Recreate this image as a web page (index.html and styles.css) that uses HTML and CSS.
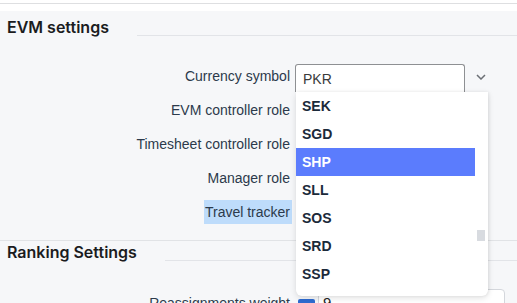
FILE: index.html
```html
<!DOCTYPE html>
<html lang="en">
<head>
    <meta charset="UTF-8">
    <meta name="viewport" content="width=device-width, initial-scale=1.0">
    <title>EVM settings</title>
    <link rel="stylesheet" href="styles.css">
</head>
<body>
    <div class="top-rule"></div>

    <div class="page">
        <section class="section first">
            <div class="section-head">
                <h2>EVM settings</h2>
                <div class="head-rule"></div>
            </div>

            <div class="form">
                <div class="row">
                    <label>Currency symbol</label>
                    <div class="control">
                        <div class="select">
                            <span class="select-value">PKR</span>
                            <div class="dropdown">
                                <ul class="options">
                                    <li>SEK</li>
                                    <li>SGD</li>
                                    <li class="active">SHP</li>
                                    <li>SLL</li>
                                    <li>SOS</li>
                                    <li>SRD</li>
                                    <li>SSP</li>
                                </ul>
                                <div class="scroll-thumb"></div>
                            </div>
                        </div>
                        <svg class="chevron" width="10" height="6" viewBox="0 0 10 6">
                            <polyline points="1,1 5,5 9,1" fill="none" stroke="#6b6f75" stroke-width="1.5"/>
                        </svg>
                    </div>
                </div>
                <div class="row">
                    <label>EVM controller role</label>
                    <div class="control"></div>
                </div>
                <div class="row">
                    <label>Timesheet controller role</label>
                    <div class="control"></div>
                </div>
                <div class="row">
                    <label>Manager role</label>
                    <div class="control"></div>
                </div>
                <div class="row">
                    <label><span class="selected">Travel tracker</span></label>
                    <div class="control"></div>
                </div>
            </div>
        </section>

        <section class="section second">
            <div class="section-head">
                <h2>Ranking Settings</h2>
                <div class="head-rule"></div>
            </div>

            <div class="form">
                <div class="row weight-row">
                    <label>Reassignments weight</label>
                    <div class="control">
                        <span class="checkbox">
                            <svg width="12" height="10" viewBox="0 0 12 10">
                                <polyline points="1.5,5 4.5,8 10.5,1.5" fill="none" stroke="#fff" stroke-width="2"/>
                            </svg>
                        </span>
                        <div class="number-input">9</div>
                    </div>
                </div>
            </div>
        </section>
    </div>
</body>
</html>
```

FILE: styles.css
```css
body {
    margin: 0;
    background-color: #fff;
    font-family: 'Liberation Sans', Arial, sans-serif;
    font-size: 14px;
    color: #2c3a4b;
    height: 303px;
    overflow: hidden;
}

.top-rule {
    height: 3px;
    border-bottom: 1px solid #dedfe1;
    margin-bottom: 7px;
}

.page {
    background-color: #f6f7f9;
    height: 292px;
}

.section-head {
    display: flex;
    align-items: flex-end;
    padding-left: 7px;
}

.section-head h2 {
    margin: 0;
    font-family: 'Inter', sans-serif;
    font-weight: 600;
    font-size: 16px;
    line-height: 20px;
    color: #1b1c1e;
}

.head-rule {
    flex: 1;
    border-top: 1px solid #e2e4e8;
    margin-left: 28px;
}

.first {
    padding-top: 6px;
    padding-bottom: 11px;
}

.first .head-rule {
    margin-bottom: 1px;
}

.first .form {
    margin-top: 22px;
}

.second {
    border-top: 1px solid #e1e3e6;
    padding-top: 1px;
}

.second .head-rule {
    margin-bottom: 1px;
}

.second .form {
    margin-top: 24px;
}

.row {
    display: flex;
    align-items: center;
    height: 34px;
}

.row label {
    width: 290px;
    text-align: right;
    flex-shrink: 0;
}

.selected {
    background-color: #bedcfb;
    padding: 4px 2px 4px 1px;
    margin-right: -2px;
}

.control {
    display: flex;
    align-items: center;
    margin-left: 5px;
}

.select {
    position: relative;
    box-sizing: border-box;
    width: 170px;
    height: 28px;
    margin-top: 4px;
    background-color: #fff;
    border: 1px solid #8e9093;
    border-bottom: none;
    border-radius: 3px 3px 0 0;
    display: flex;
    align-items: center;
}

.select-value {
    padding-left: 7px;
    color: #3a3a3a;
}

.chevron {
    margin-left: 11px;
    margin-top: 2px;
}

.dropdown {
    position: absolute;
    top: 27px;
    left: 0;
    width: 192px;
    height: 204px;
    background-color: #fff;
    border-radius: 0 0 6px 6px;
    box-shadow: 0 2px 6px rgba(0, 0, 0, 0.12), 1px 0 3px rgba(0, 0, 0, 0.06);
    z-index: 2;
}

.options {
    list-style: none;
    margin: 0;
    padding: 0;
    width: 179px;
}

.options li {
    height: 28px;
    line-height: 28px;
    padding-left: 6px;
    font-weight: bold;
    color: #1b2a3a;
}

.options li.active {
    background-color: #5b7cfd;
    color: #fff;
}

.scroll-thumb {
    position: absolute;
    top: 138px;
    left: 181px;
    width: 8px;
    height: 11px;
    background-color: #d8dbe0;
}

.weight-row .control {
    align-self: flex-start;
    margin-top: 3px;
}

.checkbox {
    box-sizing: border-box;
    width: 17px;
    height: 17px;
    margin-top: 6px;
    margin-left: 3px;
    background-color: #2e6bd0;
    border-radius: 2px;
    display: flex;
    align-items: center;
    justify-content: center;
}

.number-input {
    box-sizing: border-box;
    width: 187px;
    height: 30px;
    margin-left: 3px;
    padding: 4px 0 0 4px;
    background-color: #fff;
    border: 1px solid #d4d7dc;
    border-radius: 4px;
    color: #222;
    font-size: 15px;
}
```
